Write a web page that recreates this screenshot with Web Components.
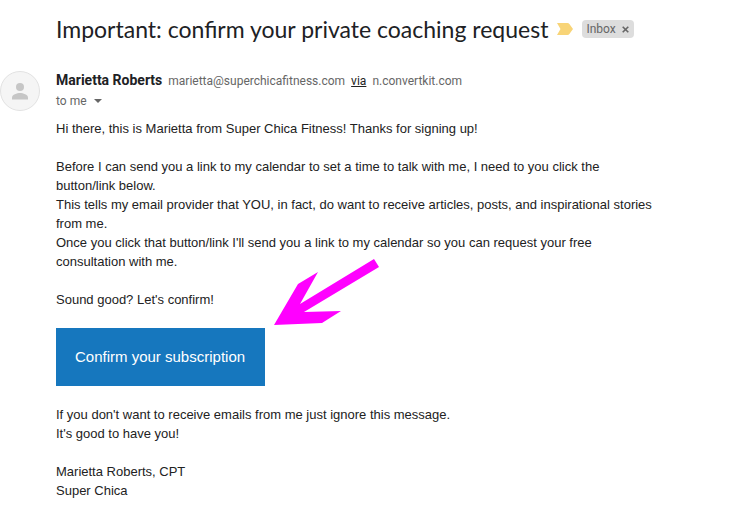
<!DOCTYPE html>
<html lang="en">
<head>
<meta charset="utf-8">
<title>Important: confirm your private coaching request</title>
<style>
  body { margin: 0; background: #fff; color: #222; font-family: "Liberation Sans", Arial, sans-serif; }
</style>
</head>
<body>
<mail-message></mail-message>

<script>
class UiElement extends HTMLElement {
  connectedCallback() {
    if (this.shadowRoot) return;
    this.attachShadow({ mode: "open" }).innerHTML = this.constructor.markup;
  }
}

class MailLabel extends UiElement {
  static markup = `
    <style>
      :host { display: inline-flex; align-items: center; gap: 5px; height: 18px; padding: 0 4px; border-radius: 4px;
        background: #ddd; color: #666; font: 12px/18px Roboto, sans-serif; }
      button { display: flex; padding: 1px; border: 0; background: none; color: inherit; }
      svg { display: block; }
    </style>
    <span><slot></slot></span>
    <button type="button" aria-label="Remove label">
      <svg width="7" height="7" viewBox="0 0 7 7"><path d="M.7.7l5.6 5.6M6.3.7L.7 6.3" stroke="currentColor" stroke-width="1.6"/></svg>
    </button>`;
}
customElements.define("mail-label", MailLabel);

class MailSubject extends UiElement {
  static markup = `
    <style>
      :host { display: flex; align-items: center; }
      h1 { margin: 0; font: 400 23px/28px Lato, sans-serif; color: #202124; }
      .marker { display: flex; margin: 0 8px; padding: 0; border: 0; background: none; }
      svg { display: block; }
    </style>
    <h1><slot></slot></h1>
    <button class="marker" type="button" aria-label="Important">
      <svg width="18" height="12" viewBox="0 0 18 12"><path d="M1 0h10.5q1.2 0 1.9 1L17 6l-3.600 5q-.7 1-1.900 1H1l3.500-6z" fill="#f8d477"/></svg>
    </button>
    <slot name="label"></slot>`;
}
customElements.define("mail-subject", MailSubject);

class MailAvatar extends UiElement {
  static markup = `
    <style>:host { display: block; } svg { display: block; }</style>
    <svg width="40" height="40" viewBox="0 0 40 40" role="img" aria-label="Profile picture">
      <circle cx="20" cy="20" r="19.500" fill="#f5f5f5" stroke="#e2e2e2"/>
      <circle cx="20" cy="16" r="4" fill="#c6c6c6"/>
      <path d="M12 28.500v-2c0-3 5-4.500 8-4.500s8 1.500 8 4.500v2z" fill="#c6c6c6"/>
    </svg>`;
}
customElements.define("mail-avatar", MailAvatar);

class MailSender extends UiElement {
  static markup = `
    <style>
      :host { display: block; font: 12px/20px Roboto, sans-serif; color: #666; }
      .from { display: flex; flex-wrap: wrap; align-items: baseline; column-gap: 6px; }
      h2 { margin: 0; font: 700 14px/20px Roboto, sans-serif; color: #202124; }
      a { color: #222; text-decoration: underline; }
      button { display: flex; align-items: center; gap: 7px; padding: 0; border: 0; background: none; font: inherit; color: inherit; }
    </style>
    <div class="from"><h2><slot name="name"></slot></h2><slot name="address"></slot><a href="#via">via</a><slot name="via"></slot></div>
    <button type="button" aria-label="Show details"><span><slot name="to"></slot></span>
      <svg width="8" height="4" viewBox="0 0 8 4"><path d="M0 0h8L4 4z" fill="#666"/></svg>
    </button>`;
}
customElements.define("mail-sender", MailSender);

class ConfirmButton extends UiElement {
  static markup = `
    <style>
      :host { display: block; width: fit-content; position: relative; }
      a { display: block; padding: 19px 20px 19px 19px; background: #1677be; color: #fff; font-size: 15px; line-height: 20px; text-decoration: none; }
      svg { position: absolute; left: calc(100% + 9px); bottom: calc(100% + 3px); }
    </style>
    <a href="#confirm"><slot></slot></a>
    <svg width="105" height="66" viewBox="0 0 105 66" aria-hidden="true">
      <path d="M100 0l5 8-75 45 37-1-19 12L0 66l24-41 20-12-18 32z" fill="#f0f"/>
    </svg>`;
}
customElements.define("confirm-button", ConfirmButton);

class MailBody extends UiElement {
  static markup = `
    <style>
      :host { display: flex; flex-direction: column; gap: 19px; max-width: 600px; font-size: 13px; line-height: 19px; }
      p { margin: 0; }
    </style>
    <p>Hi there, this is Marietta from Super Chica Fitness! Thanks for signing up!</p>
    <div>
      <p>Before I can send you a link to my calendar to set a time to talk with me, I need to you click the button/link below.</p>
      <p>This tells my email provider that YOU, in fact, do want to receive articles, posts, and inspirational stories from me.</p>
      <p>Once you click that button/link I'll send you a link to my calendar so you can request your free consultation with me.</p>
    </div>
    <p>Sound good? Let's confirm!</p>
    <confirm-button>Confirm your subscription</confirm-button>
    <div>
      <p>If you don't want to receive emails from me just ignore this message.</p>
      <p>It's good to have you!</p>
    </div>
    <div>
      <p>Marietta Roberts, CPT</p>
      <p>Super Chica</p>
    </div>`;
}
customElements.define("mail-body", MailBody);

class MailMessage extends UiElement {
  static markup = `
    <style>
      :host { display: grid; grid-template-columns: 40px 1fr; column-gap: 16px; padding-top: 15px; }
      mail-subject, mail-body { grid-column: 2; }
      mail-subject { margin-bottom: 27px; }
      mail-avatar { margin-top: 1px; }
      mail-body { margin-top: 8px; }
    </style>
    <mail-subject>Important: confirm your private coaching request<mail-label slot="label">Inbox</mail-label></mail-subject>
    <mail-avatar></mail-avatar>
    <mail-sender>
      <span slot="name">Marietta Roberts</span>
      <span slot="address">marietta@superchicafitness.com</span>
      <span slot="via">n.convertkit.com</span>
      <span slot="to">to me</span>
    </mail-sender>
    <mail-body></mail-body>`;
}
customElements.define("mail-message", MailMessage);
</script>
</body>
</html>
